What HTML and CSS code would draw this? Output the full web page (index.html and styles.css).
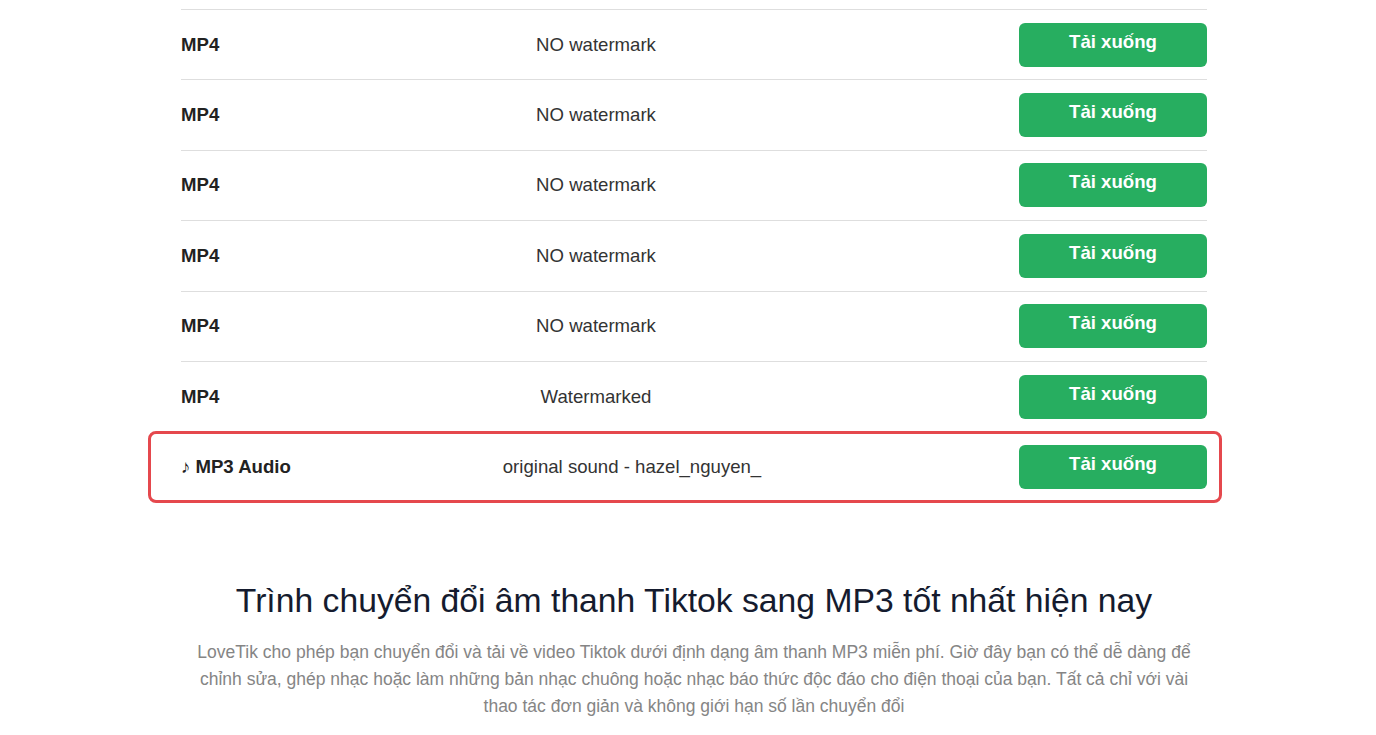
FILE: index.html
```html
<!DOCTYPE html>
<html lang="vi">
<head>
  <meta charset="UTF-8">
  <meta name="viewport" content="width=device-width, initial-scale=1.0">
  <title>LoveTik - Tải xuống</title>
<link rel="stylesheet" href="styles.css">
</head>
<body>
  <main class="page">
    <section class="result-list">
      <div class="result-row">
        <span class="format">MP4</span>
        <span class="quality">NO watermark</span>
        <a class="download-btn" href="#">Tải xuống</a>
      </div>
      <div class="result-row">
        <span class="format">MP4</span>
        <span class="quality">NO watermark</span>
        <a class="download-btn" href="#">Tải xuống</a>
      </div>
      <div class="result-row">
        <span class="format">MP4</span>
        <span class="quality">NO watermark</span>
        <a class="download-btn" href="#">Tải xuống</a>
      </div>
      <div class="result-row">
        <span class="format">MP4</span>
        <span class="quality">NO watermark</span>
        <a class="download-btn" href="#">Tải xuống</a>
      </div>
      <div class="result-row">
        <span class="format">MP4</span>
        <span class="quality">NO watermark</span>
        <a class="download-btn" href="#">Tải xuống</a>
      </div>
      <div class="result-row">
        <span class="format">MP4</span>
        <span class="quality">Watermarked</span>
        <a class="download-btn" href="#">Tải xuống</a>
      </div>
    </section>

    <section class="audio-highlight">
      <div class="audio-row">
        <span class="format">&#9834; MP3 Audio</span>
        <span class="quality">original sound - hazel_nguyen_</span>
        <a class="download-btn" href="#">Tải xuống</a>
      </div>
    </section>

    <section class="intro">
      <h2>Trình chuyển đổi âm thanh Tiktok sang MP3 tốt nhất hiện nay</h2>
      <p>LoveTik cho phép bạn chuyển đổi và tải về video Tiktok dưới định dạng âm thanh MP3 miễn phí. Giờ đây bạn có thể dễ dàng để chỉnh sửa, ghép nhạc hoặc làm những bản nhạc chuông hoặc nhạc báo thức độc đáo cho điện thoại của bạn. Tất cả chỉ với vài thao tác đơn giản và không giới hạn số lần chuyển đổi</p>
    </section>
  </main>
</body>
</html>
```

FILE: styles.css
```css
body {
  font-family: "Liberation Sans", Arial, sans-serif;
  margin: 0;
  padding: 0;
  background-color: #fff;
  color: #333;
}

.page {
  margin: 0 169px 0 181px;
  padding-top: 9px;
}

.result-list {
  border-top: 1px solid #dedede;
}

.result-row {
  display: grid;
  grid-template-columns: 200px 430px 1fr;
  align-items: center;
  padding: 12.7px 0;
  border-bottom: 1px solid #dedede;
  font-size: 18.6px;
}

.result-row:last-child {
  border-bottom: none;
}

.format {
  font-weight: bold;
  color: #222;
}

.quality {
  text-align: center;
  color: #333;
}

.download-btn {
  justify-self: end;
  display: block;
  width: 188px;
  height: 44px;
  box-sizing: border-box;
  padding-top: 9px;
  border-radius: 6px;
  background-color: #27ae60;
  color: #fff;
  font-weight: bold;
  font-size: 18.6px;
  line-height: 20px;
  text-align: center;
  text-decoration: none;
}

.audio-highlight {
  margin: 0 -15px 0 -33px;
  padding: 11px 12px 11px 30px;
  border: 3px solid #e5484d;
  border-radius: 8px;
}

.audio-row {
  display: grid;
  grid-template-columns: 200px 502px 1fr;
  align-items: center;
  font-size: 18.6px;
}

.intro {
  margin-top: 78px;
  text-align: center;
}

.intro h2 {
  margin: 0 0 19px;
  font-size: 33.7px;
  font-weight: normal;
  color: #151b2e;
}

.intro p {
  max-width: 1000px;
  margin: 0 auto;
  font-size: 17.5px;
  line-height: 27px;
  color: #858585;
}
```
